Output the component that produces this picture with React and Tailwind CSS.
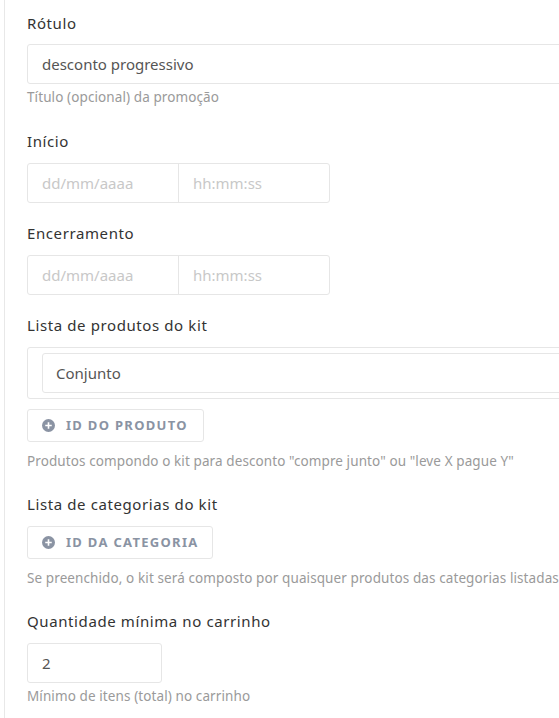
function PlusCircle() {
  return (
    <svg viewBox="0 0 16 16" className="h-[13px] w-[13px]" fill="currentColor">
      <circle cx="8" cy="8" r="8" />
      <path d="M7 4h2v3h3v2H9v3H7V9H4V7h3z" fill="#fff" />
    </svg>
  )
}

function Label({ children }) {
  return <p className="text-[15px] leading-5 tracking-[0.6px] text-[#333]">{children}</p>
}

function Help({ children, gap = 'mt-[5px]' }) {
  return (
    <p className={`${gap} whitespace-nowrap text-[13.5px] leading-4 tracking-[0.1px] text-[#9a9a9a]`}>{children}</p>
  )
}

function AddButton({ children, width, gap = 'mt-[10px]' }) {
  return (
    <button
      className={`${gap} flex h-[33px] items-center gap-[11px] rounded-[3px] border border-[#e6e6e6] bg-white pl-[14px] text-[13px] font-bold uppercase tracking-[1.3px] text-[#8a93a3] ${width}`}
    >
      <PlusCircle />
      {children}
    </button>
  )
}

export default function App() {
  return (
    <div className="min-h-[718px] bg-white font-['Noto_Sans',sans-serif]">
      <div className="ml-[4px] min-h-[718px] overflow-hidden border-l border-[#e8e8e8] pl-[22px] pt-[13px]">
        <Label>Rótulo</Label>
        <div className="mt-[11px] flex h-[40px] w-[560px] items-center rounded-[3px] border border-[#e6e6e6] px-[14px] text-[15px] text-[#555]">
          desconto progressivo
        </div>
        <Help>Título (opcional) da promoção</Help>

        <div className="mt-[26px]">
          <Label>Início</Label>
          <div className="mt-[12px] flex h-[40px] w-[303px] rounded-[3px] border border-[#e6e6e6] text-[15px] text-[#c8c8c8]">
            <div className="flex w-[151px] items-center border-r border-[#e6e6e6] px-[14px]">dd/mm/aaaa</div>
            <div className="flex flex-1 items-center px-[14px]">hh:mm:ss</div>
          </div>
        </div>

        <div className="mt-[20px]">
          <Label>Encerramento</Label>
          <div className="mt-[12px] flex h-[40px] w-[303px] rounded-[3px] border border-[#e6e6e6] text-[15px] text-[#c8c8c8]">
            <div className="flex w-[151px] items-center border-r border-[#e6e6e6] px-[14px]">dd/mm/aaaa</div>
            <div className="flex flex-1 items-center px-[14px]">hh:mm:ss</div>
          </div>
        </div>

        <div className="mt-[20px]">
          <Label>Lista de produtos do kit</Label>
          <div className="mt-[12px] w-[560px] rounded-[3px] border border-[#e6e6e6] py-[5px] pl-[14px]">
            <div className="flex h-[40px] items-center rounded-[3px] border border-[#e6e6e6] px-[13px] text-[15px] text-[#555]">
              Conjunto
            </div>
          </div>
          <AddButton width="w-[177px]">ID do produto</AddButton>
          <Help gap="mt-[11px]">Produtos compondo o kit para desconto "compre junto" ou "leve X pague Y"</Help>
        </div>

        <div className="mt-[25px]">
          <Label>Lista de categorias do kit</Label>
          <AddButton width="w-[186px]" gap="mt-[12px]">ID da categoria</AddButton>
          <Help gap="mt-[11px]">Se preenchido, o kit será composto por quaisquer produtos das categorias listadas</Help>
        </div>

        <div className="mt-[25px]">
          <Label>Quantidade mínima no carrinho</Label>
          <div className="mt-[12px] flex h-[40px] w-[135px] items-center rounded-[3px] border border-[#e6e6e6] px-[14px] text-[15px] text-[#555]">
            2
          </div>
          <Help>Mínimo de itens (total) no carrinho</Help>
        </div>
      </div>
    </div>
  )
}
